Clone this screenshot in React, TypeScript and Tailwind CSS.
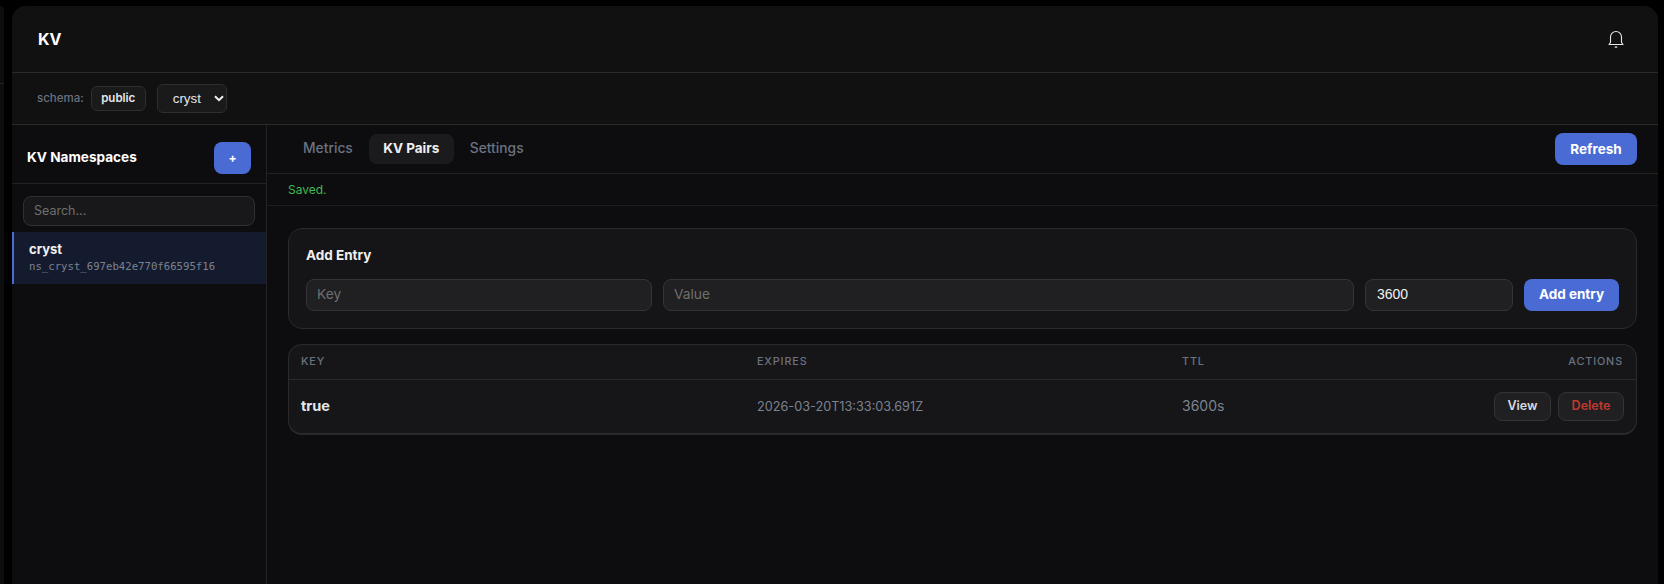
const tabs = ["Metrics", "KV Pairs", "Settings"];

export default function App() {
  return (
    <div className="flex h-[584px] w-[1664px] overflow-hidden bg-black pt-[6px] font-['Inter',sans-serif] text-white">
      {/* sliver of the window behind */}
      <div className="h-[578px] w-[4px] rounded-tr-[8px] bg-[#0e0e10]">
        <div className="h-[78px] border-b border-[#242424]" />
      </div>

      <div className="ml-[8px] flex h-[640px] w-[1646px] flex-col overflow-hidden rounded-t-[14px] bg-[#111112]">
        <header className="flex h-[67px] shrink-0 items-center justify-between border-b border-[#2a2a2a] pl-[26px] pr-[33px]">
          <h1 className="text-[16px] font-bold">KV</h1>
          <svg width="18" height="18" viewBox="0 0 18 18" fill="none" stroke="#e8e8e8" strokeWidth="1.1">
            <path d="M3.5 12.5V7a5.5 5.5 0 0 1 11 0v5.5l1.5 2H2l1.5-2Z" strokeLinejoin="round" />
            <path d="M7.8 16.7c.7.5 1.7.5 2.4 0" />
          </svg>
        </header>

        <div className="flex h-[52px] shrink-0 items-center border-b border-[#2a2a2a] pl-[25px]">
          <span className="text-[11.5px] font-medium text-[#6b7280]">schema:</span>
          <span className="ml-[7px] flex h-[25px] w-[55px] items-center justify-center rounded-[6px] border border-[#2e2e2e] bg-[#1a1a1b] text-[11.5px] font-semibold text-[#e5e7eb]">public</span>
          <div className="ml-[11px] flex h-[29px] w-[70px] items-center rounded-[6px] border border-[#2e2e2e] bg-[#1a1a1b] pl-[15px] font-['Liberation_Sans',sans-serif] text-[13.33px] text-[#e5e7eb]">
            <span>cryst</span>
            <svg className="ml-[13px]" width="10" height="7" viewBox="0 0 10 7" fill="none">
              <path d="M1 1.2 5 5.2 9 1.2" stroke="#f0f0f0" strokeWidth="2" />
            </svg>
          </div>
        </div>

        <div className="flex min-h-0 flex-1 bg-[#0d0d0f]">
          <aside className="w-[255px] shrink-0 border-r border-[#222]">
            <div className="flex h-[59px] items-start justify-between border-b border-[#222] pl-[15px] pr-[15px] pt-[17px]">
              <h2 className="mt-[6px] text-[13.6px] font-bold leading-[18px]">KV Namespaces</h2>
              <button className="flex h-[32px] w-[37px] items-center justify-center rounded-[8px] bg-[#4a6bd4] text-[12px] font-bold">+</button>
            </div>
            <div className="px-[11px] pb-[6px] pt-[12px]">
              <input
                placeholder="Search..."
                className="h-[30px] w-full rounded-[8px] border border-[#303030] bg-[#18181a] px-[10px] pb-[2px] text-[12.5px] outline-none placeholder:text-[#6f6f6f]"
              />
            </div>
            <div className="flex h-[52px] flex-col justify-center border-l-2 border-[#4a6bd4] bg-[#151b2e] pl-[15px]">
              <div className="text-[13px] font-bold leading-[18px] text-[#f0f0f0]">cryst</div>
              <div className="font-['DejaVu_Sans_Mono',monospace] text-[10.66px] leading-[18px] text-[#7b8290]">ns_cryst_697eb42e770f66595f16</div>
            </div>
          </aside>

          <main className="min-w-0 flex-1">
            <div className="flex h-[49px] items-center justify-between border-b border-[#222] pl-[23px] pr-[21px]">
              <div className="flex items-center gap-[2px]">
                {tabs.map((t) => (
                  <button
                    key={t}
                    className={
                      t === "KV Pairs"
                        ? "h-[30px] w-[85px] rounded-[8px] bg-[#1b1b1d] pb-[1px] text-[13.5px] font-bold text-[#f0f0f0]"
                        : "h-[30px] px-[14px] pb-[1px] text-[13.8px] font-medium text-[#6b7280] first:pl-[13px]"
                    }
                  >
                    {t}
                  </button>
                ))}
              </div>
              <button className="h-[32px] w-[82px] rounded-[8px] bg-[#4a6bd4] text-[13.5px] font-bold">Refresh</button>
            </div>

            <div className="flex h-[32px] items-center border-b border-[#1d1d1f] pl-[21px] text-[12px] text-[#3fb950]">Saved.</div>

            <div className="flex flex-col gap-[15px] px-[21px] pt-[22px]">
              <section className="h-[101px] rounded-[14px] border border-[#2a2a2c] bg-[#151517] px-[17px] pt-[17px]">
                <h3 className="text-[13.5px] font-bold leading-[18px] text-[#f0f0f0]">Add Entry</h3>
                <div className="mt-[15px] flex gap-[11px]">
                  <input placeholder="Key" className="h-[32px] w-[346px] rounded-[8px] border border-[#343436] bg-[#202022] px-[10px] pb-[2px] text-[13.75px] outline-none placeholder:text-[#6f6f6f]" />
                  <input placeholder="Value" className="h-[32px] w-[691px] rounded-[8px] border border-[#343436] bg-[#202022] px-[10px] pb-[2px] text-[13.75px] outline-none placeholder:text-[#6f6f6f]" />
                  <input defaultValue="3600" className="h-[32px] w-[148px] rounded-[8px] border border-[#343436] bg-[#202022] px-[11px] pb-[2px] font-['Liberation_Sans',sans-serif] text-[14px] text-[#f0f0f0] outline-none" />
                  <button className="h-[32px] w-[95px] rounded-[8px] bg-[#4a6bd4] pb-[1px] text-[13.5px] font-bold">Add entry</button>
                </div>
              </section>

              <section className="h-[91px] rounded-[14px] border-x border-t border-b-2 border-[#2a2a2c] bg-[#161618]">
                <div className="flex h-[35px] items-center border-b border-[#2a2a2c] pl-[12px] pr-[13px] text-[10.8px] font-medium tracking-[0.08em] text-[#6b7280]">
                  <span className="w-[456px]">KEY</span>
                  <span className="w-[425px]">EXPIRES</span>
                  <span className="w-[200px]">TTL</span>
                  <span className="flex-1 text-right">ACTIONS</span>
                </div>
                <div className="flex h-[53px] items-center pl-[12px] pr-[12px] text-[13px]">
                  <span className="w-[456px] pb-[2px] text-[14.5px] font-bold text-[#e5e7eb]">true</span>
                  <span className="w-[425px] text-[12.7px] text-[#7b8290]">2026-03-20T13:33:03.691Z</span>
                  <span className="w-[200px] pb-[3px] text-[14px] text-[#7b8290]">3600s</span>
                  <div className="flex flex-1 justify-end gap-[7px]">
                    <button className="h-[29px] w-[57px] rounded-[8px] border border-[#343436] bg-[#202022] text-[12.5px] font-semibold text-[#d8dbe0]">View</button>
                    <button className="h-[29px] w-[66px] rounded-[8px] border border-[#343436] bg-[#202022] text-[12.5px] font-semibold text-[#c0392f]">Delete</button>
                  </div>
                </div>
              </section>
            </div>
          </main>
        </div>
      </div>
    </div>
  );
}
